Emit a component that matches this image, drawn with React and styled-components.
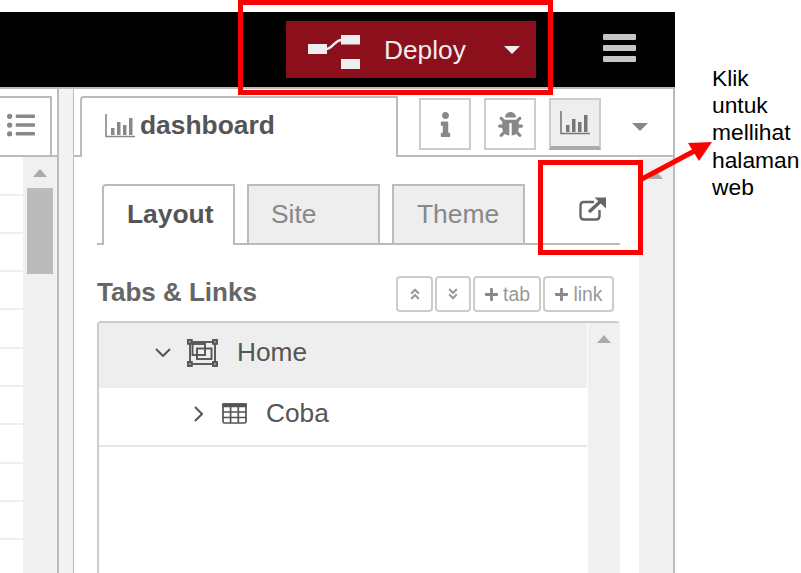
import React from "react";
import styled, { createGlobalStyle } from "styled-components";
import { FaInfo, FaBug, FaListUl, FaPlus, FaAngleDoubleUp, FaAngleDoubleDown } from "react-icons/fa";

const GlobalStyle = createGlobalStyle`
  html, body {
    margin: 0;
    background: #fff;
  }
  * {
    box-sizing: border-box;
  }
`;

const Page = styled.div`
  position: relative;
  width: 801px;
  height: 573px;
  padding-top: 12px;
  overflow: hidden;
  font-family: "Liberation Sans", Arial, sans-serif;
`;

const Header = styled.header`
  width: 675px;
  height: 77px;
  background: #000;
  border-bottom: 2px solid #bbb;
  display: flex;
  justify-content: flex-end;
  align-items: flex-start;
  padding: 9px 39px 0 0;
`;

const DeployButton = styled.div`
  width: 250px;
  height: 57px;
  background: #8c101c;
  color: #eee;
  display: flex;
  align-items: center;
  padding-left: 22px;
  font-size: 26.3px;
`;

const DeployGraphic = styled.span`
  margin-top: 5px;
`;

const DeployLabel = styled.span`
  margin: 2px 0 0 24px;
`;

const DeployCaret = styled.span`
  margin-left: 38px;
  width: 0;
  height: 0;
  border-left: 8.5px solid transparent;
  border-right: 8.5px solid transparent;
  border-top: 8px solid #eee;
`;

const MenuButton = styled.div`
  width: 33px;
  margin: 13px 0 0 67px;
  display: flex;
  flex-direction: column;
  gap: 5.5px;
`;

const MenuBar = styled.span`
  height: 5.5px;
  background: #c6c6c6;
  border-radius: 1px;
`;

const Main = styled.main`
  width: 675px;
  height: 484px;
  display: flex;
`;

const LeftPanel = styled.section`
  width: 59px;
  border-right: 2px solid #bbb;
  display: flex;
  flex-direction: column;
`;

const LeftBar = styled.div`
  height: 68px;
  padding-top: 7px;
  border-bottom: 2px solid #bbb;
`;

const ListTab = styled.div`
  width: 52px;
  height: 60px;
  border-top: 2px solid #bbb;
  border-right: 2px solid #bbb;
  color: #888;
  font-size: 28px;
  display: flex;
  align-items: center;
  padding: 0 0 4px 7px;
`;

const LeftBody = styled.div`
  flex: 1;
  display: flex;
  min-height: 0;
`;

const LeftRows = styled.div`
  width: 23px;
  padding-top: 36.5px;
`;

const LeftRow = styled.div`
  height: 38.3px;
  border-top: 2px solid #eee;
`;

const Scrollbar = styled.div`
  flex: none;
  width: ${(p) => p.$width}px;
  background: #f0f0f0;
  display: flex;
  flex-direction: column;
  align-items: center;
  padding-top: ${(p) => p.$top}px;
`;

const ScrollArrow = styled.span`
  width: 0;
  height: 0;
  border-left: 7.5px solid transparent;
  border-right: 7.5px solid transparent;
  border-bottom: 8px solid #aaa;
`;

const ScrollThumb = styled.div`
  width: 26px;
  height: 86px;
  margin-top: 11px;
  background: #bbb;
`;

const Separator = styled.div`
  width: 14px;
  background: #f3f3f3;
`;

const Sidebar = styled.section`
  flex: 1;
  border-left: 1px solid #bbb;
  border-right: 2px solid #bbb;
  display: flex;
  flex-direction: column;
  min-width: 0;
`;

const SidebarBar = styled.div`
  height: 68px;
  flex: none;
  display: flex;
  align-items: flex-start;
  border-bottom: 2px solid #bbb;
  padding-left: 6px;
`;

const SidebarTab = styled.div`
  width: 318px;
  height: 61px;
  margin-top: 7px;
  background: #fff;
  border: 2px solid #bbb;
  border-bottom: none;
  border-radius: 4px 0 0 0;
  display: flex;
  align-items: center;
  padding: 0 0 4px 23px;
  gap: 5px;
  color: #555;
  font-size: 26.4px;
  font-weight: bold;
`;

const ToolButtons = styled.div`
  display: flex;
  gap: 13px;
  margin: 9px 0 0 21px;
`;

const ToolButton = styled.div`
  width: 52px;
  height: 52px;
  border: 2px solid #ccc;
  border-bottom: ${(p) => (p.$active ? "4px solid #aaa" : "2px solid #ccc")};
  background: ${(p) => (p.$active ? "#eee" : "#fff")};
  color: #888;
  font-size: 25px;
  display: flex;
  align-items: center;
  justify-content: center;
`;

const ToolCaret = styled.span`
  width: 0;
  height: 0;
  margin: 34px 0 0 31px;
  border-left: 8px solid transparent;
  border-right: 8px solid transparent;
  border-top: 8px solid #888;
`;

const SidebarBody = styled.div`
  flex: 1;
  min-height: 0;
  display: flex;
  padding-top: 1px;
`;

const Content = styled.div`
  flex: 1;
  min-width: 0;
  padding: 26px 19px 0 23px;
  display: flex;
  flex-direction: column;
`;

const TabRow = styled.div`
  height: 61px;
  flex: none;
  display: flex;
  align-items: flex-start;
  padding-left: 5px;
  border-bottom: 2px solid #bbb;
`;

const ContentTab = styled.div`
  width: ${(p) => p.$width}px;
  height: ${(p) => (p.$active ? 61 : 59)}px;
  margin-right: ${(p) => p.$gap}px;
  background: ${(p) => (p.$active ? "#fff" : "#eee")};
  border: 2px solid #bbb;
  border-bottom: none;
  border-radius: ${(p) => (p.$active ? "4px 0 0 0" : "0")};
  color: ${(p) => (p.$active ? "#555" : "#888")};
  font-size: 26.4px;
  font-weight: ${(p) => (p.$active ? "bold" : "normal")};
  display: flex;
  align-items: center;
  padding: 0 0 ${(p) => (p.$active ? 3 : 0)}px ${(p) => p.$pad}px;
`;

const ExternalLink = styled.div`
  margin: 0 13px 0 auto;
  padding-top: 13px;
  line-height: 0;
`;

const SectionHead = styled.div`
  height: 36px;
  flex: none;
  margin-top: 31px;
  padding-right: 6px;
  display: flex;
  justify-content: space-between;
  align-items: center;
`;

const SectionTitle = styled.h3`
  margin: 0;
  padding-bottom: 3px;
  font-size: 26px;
  font-weight: bold;
  color: #666;
`;

const SmallButtons = styled.div`
  display: flex;
  gap: 2px;
`;

const SmallButton = styled.div`
  width: ${(p) => p.$width}px;
  height: 36px;
  border: 2px solid #ccc;
  border-radius: 4px;
  color: #999;
  font-size: 19.4px;
  display: flex;
  align-items: center;
  justify-content: center;
  gap: 4px;
`;

const TreePanel = styled.div`
  flex: 1;
  min-height: 0;
  margin-top: 9px;
  display: flex;
  border-top: 2px solid #ccc;
  border-left: 2px solid #ccc;
  border-radius: 4px 4px 0 0;
`;

const TreeList = styled.div`
  flex: 1;
  min-width: 0;
  margin-right: 1px;
`;

const TreeRow = styled.div`
  height: ${(p) => p.$height}px;
  background: ${(p) => (p.$open ? "#eee" : "#fff")};
  border-bottom: ${(p) => (p.$open ? "none" : "2px solid #e6e6e6")};
  padding: 0 0 6px ${(p) => p.$indent}px;
  display: flex;
  align-items: center;
  color: #555;
  font-size: 26.3px;
`;

const TreeIcon = styled.span`
  margin-left: ${(p) => p.$gap}px;
`;

const TreeLabel = styled.span`
  margin-left: ${(p) => p.$gap}px;
`;

const Icon = styled.svg`
  flex: none;
  display: block;
`;

const AnnotationBox = styled.div`
  position: absolute;
  left: ${(p) => p.$x}px;
  top: ${(p) => p.$y}px;
  width: ${(p) => p.$w}px;
  height: ${(p) => p.$h}px;
  border: 5px solid #f00;
`;

const AnnotationArrow = styled.svg`
  position: absolute;
  left: 640px;
  top: 135px;
`;

const AnnotationNote = styled.div`
  position: absolute;
  left: 712px;
  top: 65px;
  font-size: 22.8px;
  line-height: 27.2px;
  color: #000;
  white-space: nowrap;
`;

const DeployIcon = () => (
  <Icon width="52" height="36" viewBox="0 0 52 36">
    <rect x="0" y="10" width="19" height="10" fill="#eee" />
    <rect x="33" y="1" width="19" height="9.5" fill="#eee" />
    <rect x="33" y="25" width="19" height="10" fill="#eee" />
    <path d="M18 15 C25 15 26 6 34 6" fill="none" stroke="#eee" strokeWidth="2.5" />
  </Icon>
);

const ChartIcon = ({ size = 30, color = "#888" }) => (
  <Icon width={size} height={size * 0.8} viewBox="0 0 30 24" fill={color}>
    <path d="M1 0 V22.5 H30" fill="none" stroke={color} strokeWidth="1.6" />
    <rect x="6" y="14" width="3.5" height="7" />
    <rect x="12" y="8" width="3.5" height="13" />
    <rect x="18" y="11" width="3.5" height="10" />
    <rect x="24" y="4" width="3.5" height="17" />
  </Icon>
);

const ExternalIcon = () => (
  <Icon width="28" height="24" viewBox="0 0 28 24" fill="none" stroke="#666">
    <path d="M15 5 H5 Q1.5 5 1.5 8.5 V19 Q1.5 22.5 5 22.5 H17 Q20.5 22.5 20.5 19 V13" strokeWidth="2.4" />
    <path d="M10 15 L23 3" strokeWidth="3.4" />
    <path d="M15.5 0.5 H27 V11.5 Z" fill="#666" stroke="none" />
  </Icon>
);

const GroupIcon = () => (
  <Icon width="31" height="28" viewBox="0 0 31 28" fill="none" stroke="#555" strokeWidth="1.9">
    <rect x="3" y="3" width="25" height="22" />
    <rect x="5.5" y="5" width="12.5" height="11" />
    <rect x="10" y="9.5" width="14.5" height="10.5" />
    <rect x="0.8" y="0.8" width="4" height="4" fill="#999" />
    <rect x="26" y="0.8" width="4" height="4" fill="#999" />
    <rect x="0.8" y="23" width="4" height="4" fill="#999" />
    <rect x="26" y="23" width="4" height="4" fill="#999" />
  </Icon>
);

const TableIcon = () => (
  <Icon width="25" height="21" viewBox="0 0 25 21" fill="none" stroke="#555" strokeWidth="1.7">
    <rect x="1" y="1" width="23" height="19" rx="1.5" />
    <path d="M1 3.5 H24 V1 H1 Z" fill="#555" />
    <path d="M1 9 H24 M1 14.5 H24 M8.6 3 V20 M16.3 3 V20" />
  </Icon>
);

const Chevron = ({ open }) => (
  <Icon width={open ? 16 : 9} height={open ? 9 : 16} viewBox={open ? "0 0 16 9" : "0 0 9 16"} fill="none" stroke="#555" strokeWidth="2">
    <path d={open ? "M1 1 L8 8 L15 1" : "M1 1 L8 8 L1 15"} />
  </Icon>
);

const App = () => {
  const leftRows = Array.from({ length: 10 }, (_, i) => i);

  return (
    <Page>
      <GlobalStyle />
      <Header>
        <DeployButton>
          <DeployGraphic>
            <DeployIcon />
          </DeployGraphic>
          <DeployLabel>Deploy</DeployLabel>
          <DeployCaret />
        </DeployButton>
        <MenuButton>
          <MenuBar />
          <MenuBar />
          <MenuBar />
        </MenuButton>
      </Header>
      <Main>
        <LeftPanel>
          <LeftBar>
            <ListTab>
              <FaListUl />
            </ListTab>
          </LeftBar>
          <LeftBody>
            <LeftRows>
              {leftRows.map((r) => (
                <LeftRow key={r} />
              ))}
            </LeftRows>
            <Scrollbar $width={34} $top={12}>
              <ScrollArrow />
              <ScrollThumb />
            </Scrollbar>
          </LeftBody>
        </LeftPanel>
        <Separator />
        <Sidebar>
          <SidebarBar>
            <SidebarTab>
              <ChartIcon />
              dashboard
            </SidebarTab>
            <ToolButtons>
              <ToolButton>
                <FaInfo />
              </ToolButton>
              <ToolButton>
                <FaBug />
              </ToolButton>
              <ToolButton $active>
                <ChartIcon color="#777" />
              </ToolButton>
            </ToolButtons>
            <ToolCaret />
          </SidebarBar>
          <SidebarBody>
            <Content>
              <TabRow>
                <ContentTab $active $width={133} $gap={12} $pad={23}>
                  Layout
                </ContentTab>
                <ContentTab $width={133} $gap={12} $pad={22}>
                  Site
                </ContentTab>
                <ContentTab $width={133} $gap={0} $pad={23}>
                  Theme
                </ContentTab>
                <ExternalLink>
                  <ExternalIcon />
                </ExternalLink>
              </TabRow>
              <SectionHead>
                <SectionTitle>Tabs &amp; Links</SectionTitle>
                <SmallButtons>
                  <SmallButton $width={37}>
                    <FaAngleDoubleUp size={14} />
                  </SmallButton>
                  <SmallButton $width={36}>
                    <FaAngleDoubleDown size={14} />
                  </SmallButton>
                  <SmallButton $width={68}>
                    <FaPlus size={15} color="#888" />
                    tab
                  </SmallButton>
                  <SmallButton $width={71}>
                    <FaPlus size={15} color="#888" />
                    link
                  </SmallButton>
                </SmallButtons>
              </SectionHead>
              <TreePanel>
                <TreeList>
                  <TreeRow $open $height={65} $indent={56}>
                    <Chevron open />
                    <TreeIcon $gap={16}>
                      <GroupIcon />
                    </TreeIcon>
                    <TreeLabel $gap={19}>Home</TreeLabel>
                  </TreeRow>
                  <TreeRow $height={59} $indent={95}>
                    <Chevron />
                    <TreeIcon $gap={19}>
                      <TableIcon />
                    </TreeIcon>
                    <TreeLabel $gap={19}>Coba</TreeLabel>
                  </TreeRow>
                </TreeList>
                <Scrollbar $width={32} $top={12}>
                  <ScrollArrow />
                </Scrollbar>
              </TreePanel>
            </Content>
            <Scrollbar $width={34} $top={13}>
              <ScrollArrow />
            </Scrollbar>
          </SidebarBody>
        </Sidebar>
      </Main>

      <AnnotationBox $x={238} $y={0} $w={315} $h={95} />
      <AnnotationBox $x={538} $y={160} $w={105} $h={95} />
      <AnnotationArrow width="75" height="50" viewBox="0 0 75 50">
        <path d="M2 44 L60 13" stroke="#f00" strokeWidth="5" fill="none" />
        <path d="M72 7 L48 8 L59 26 Z" fill="#f00" />
      </AnnotationArrow>
      <AnnotationNote>
        Klik
        <br />
        untuk
        <br />
        mellihat
        <br />
        halaman
        <br />
        web
      </AnnotationNote>
    </Page>
  );
};

export default App;
